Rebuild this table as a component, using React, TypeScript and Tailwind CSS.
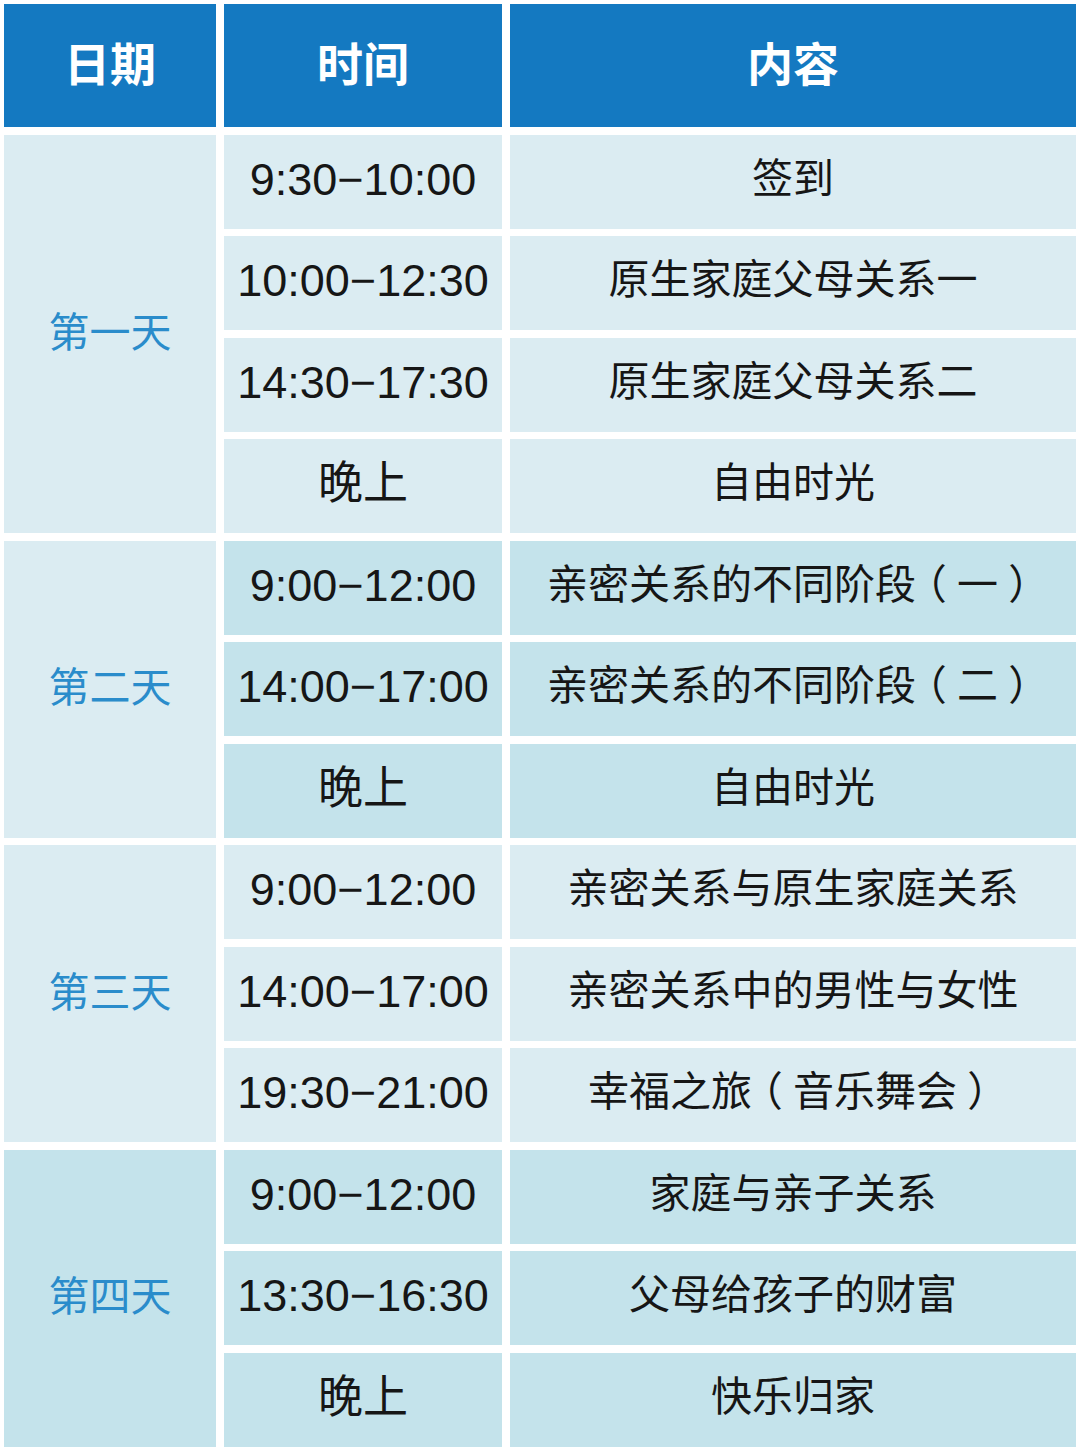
import React from "react";

type Slot = { time: string; title: string };
type Day = { label: string; dayBg: string; rowBg: string; slots: Slot[] };

const LIGHT = "bg-[#dbecf2]";
const DARK = "bg-[#c4e3eb]";

const days: Day[] = [
  {
    label: "第一天",
    dayBg: LIGHT,
    rowBg: LIGHT,
    slots: [
      { time: "9:30−10:00", title: "签到" },
      { time: "10:00−12:30", title: "原生家庭父母关系一" },
      { time: "14:30−17:30", title: "原生家庭父母关系二" },
      { time: "晚上", title: "自由时光" },
    ],
  },
  {
    label: "第二天",
    dayBg: LIGHT,
    rowBg: DARK,
    slots: [
      { time: "9:00−12:00", title: "亲密关系的不同阶段（一）" },
      { time: "14:00−17:00", title: "亲密关系的不同阶段（二）" },
      { time: "晚上", title: "自由时光" },
    ],
  },
  {
    label: "第三天",
    dayBg: LIGHT,
    rowBg: LIGHT,
    slots: [
      { time: "9:00−12:00", title: "亲密关系与原生家庭关系" },
      { time: "14:00−17:00", title: "亲密关系中的男性与女性" },
      { time: "19:30−21:00", title: "幸福之旅（音乐舞会）" },
    ],
  },
  {
    label: "第四天",
    dayBg: DARK,
    rowBg: DARK,
    slots: [
      { time: "9:00−12:00", title: "家庭与亲子关系" },
      { time: "13:30−16:30", title: "父母给孩子的财富" },
      { time: "晚上", title: "快乐归家" },
    ],
  },
];

const font = "font-['Liberation_Sans','Noto_Sans_CJK_SC',sans-serif]";

// fullwidth brackets drawn centred in their em box, like the source
function Title({ text }: { text: string }) {
  const parts = text.split(/([（）])/);
  return (
    <>
      {parts.map((p, i) =>
        p === "（" || p === "）" ? (
          <span
            key={i}
            className="inline-block w-[1em] text-center [font-feature-settings:'halt']"
          >
            {p}
          </span>
        ) : (
          <React.Fragment key={i}>{p}</React.Fragment>
        )
      )}
    </>
  );
}

export default function App() {
  return (
    <div className={`w-[1080px] h-[1450px] bg-white p-1 ${font}`}>
      <div className="grid grid-cols-[212px_278px_566px] grid-rows-[123px_repeat(13,94px)] gap-x-[8px] gap-y-[7.5px]">
        {/* header */}
        {["日期", "时间", "内容"].map((h) => (
          <div
            key={h}
            className="flex items-center justify-center bg-[#1479c1] text-white text-[46px] font-bold"
          >
            {h}
          </div>
        ))}

        {days.map((d) => (
          <React.Fragment key={d.label}>
            <div
              className={`${d.dayBg} ${d.slots.length === 4 ? "row-span-4" : "row-span-3"} col-start-1 flex items-center justify-center text-[41px] text-[#2a8ccb]`}
            >
              {d.label}
            </div>
            {d.slots.map((s, i) => (
              <React.Fragment key={i}>
                <div
                  className={`${d.rowBg} col-start-2 flex items-center justify-center pb-1 text-[45px] text-[#161616]`}
                >
                  {s.time}
                </div>
                <div
                  className={`${d.rowBg} col-start-3 flex items-center justify-center pb-1 text-[41px] text-[#161616]`}
                >
                  <span>
                    <Title text={s.title} />
                  </span>
                </div>
              </React.Fragment>
            ))}
          </React.Fragment>
        ))}
      </div>
    </div>
  );
}
